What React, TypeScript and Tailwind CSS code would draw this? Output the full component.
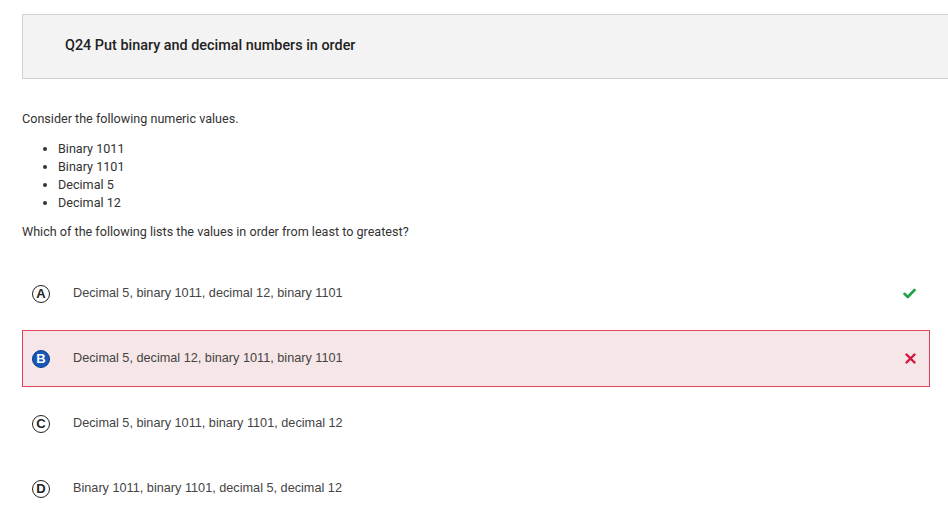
import React from "react";

const values = ["Binary 1011", "Binary 1101", "Decimal 5", "Decimal 12"];

const options = [
  { letter: "A", text: "Decimal 5, binary 1011, decimal 12, binary 1101", status: "correct" },
  { letter: "B", text: "Decimal 5, decimal 12, binary 1011, binary 1101", status: "wrong" },
  { letter: "C", text: "Decimal 5, binary 1011, binary 1101, decimal 12", status: "" },
  { letter: "D", text: "Binary 1011, binary 1101, decimal 5, decimal 12", status: "" },
];

const LetterBadge = ({ letter, selected }: { letter: string; selected: boolean }) =>
  selected ? (
    <span className="flex h-[18px] w-[18px] items-center justify-center rounded-full border border-[#0b3f8c] bg-[#1657b8] text-[13px] font-bold leading-none text-white">
      {letter}
    </span>
  ) : (
    <span className="flex h-[18px] w-[18px] items-center justify-center rounded-full border-[1.5px] border-[#222] bg-white text-[13px] font-bold leading-none text-[#222]">
      {letter}
    </span>
  );

const Check = () => (
  <svg width="13" height="11" viewBox="0 0 13 11" fill="none">
    <path d="M1.5 5.8 L4.8 9 L11.5 2" stroke="#1fa24a" strokeWidth="2.6" strokeLinecap="round" strokeLinejoin="round" />
  </svg>
);

const Cross = () => (
  <svg width="11" height="11" viewBox="0 0 11 11" fill="none">
    <path d="M1.5 1.5 L9.5 9.5 M9.5 1.5 L1.5 9.5" stroke="#d6123f" strokeWidth="2.4" strokeLinecap="round" />
  </svg>
);

export default function App() {
  return (
    <div className="min-h-screen bg-white pt-[14px] pl-[22px] font-['Roboto',sans-serif] text-[#333]">
      {/* question header */}
      <div className="flex h-[65px] items-center border-y border-l border-[#d3d3d3] bg-[#f3f3f3] pb-[2px] pl-[42px]">
        <h1 className="text-[14.4px] font-medium text-[#222]">Q24 Put binary and decimal numbers in order</h1>
      </div>

      <div className="pr-[18px]">
        <p className="mt-[31px] text-[12.6px] leading-[18px]">Consider the following numeric values.</p>
        <ul className="mt-[12px] list-disc pl-[36px] text-[12.6px] leading-[18px]">
          {values.map((v) => (
            <li key={v}>{v}</li>
          ))}
        </ul>
        <p className="mt-[11px] text-[12.6px] leading-[18px]">
          Which of the following lists the values in order from least to greatest?
        </p>

        <div className="mt-[24px] flex flex-col gap-[8px] font-['Liberation_Sans',Arial,sans-serif]">
          {options.map((o) => (
            <div
              key={o.letter}
              className={`flex h-[57px] items-center border pl-[9px] pr-[13px] ${
                o.status === "wrong" ? "border-[#e34660] bg-[#f6e6e7]" : "border-transparent"
              }`}
            >
              <LetterBadge letter={o.letter} selected={o.status === "wrong"} />
              <span className="ml-[23px] flex-1 text-[12.7px] text-[#444]">{o.text}</span>
              {o.status === "correct" && <Check />}
              {o.status === "wrong" && <Cross />}
            </div>
          ))}
        </div>
      </div>
    </div>
  );
}
